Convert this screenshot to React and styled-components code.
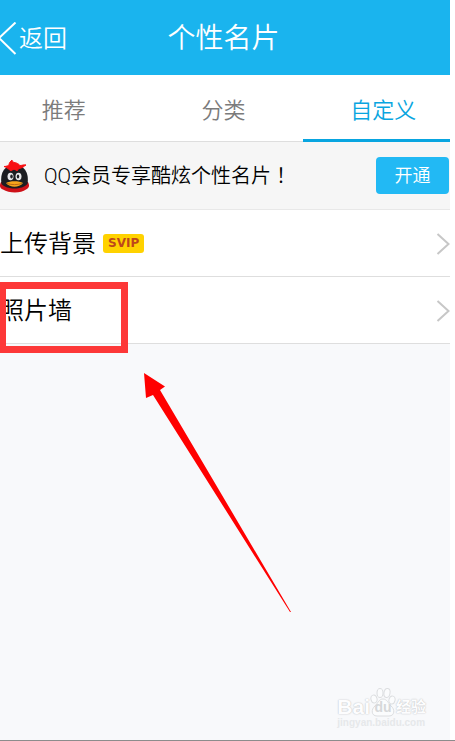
import { useState } from 'react';
import styled, { createGlobalStyle } from 'styled-components';

const GlobalStyle = createGlobalStyle`
  * {
    box-sizing: border-box;
  }

  body {
    margin: 0;
    background: #fff;
    font-family: Roboto, 'Noto Sans CJK SC', sans-serif;
    font-weight: 350;
  }

  button {
    font: inherit;
    border: none;
    padding: 0;
    background: none;
    cursor: pointer;
  }
`;

const Screen = styled.div`
  position: relative;
  display: flex;
  flex-direction: column;
  min-height: 100vh;
  border-bottom: 1px solid #8c8c8c;
`;

const Page = styled.div`
  position: relative;
  flex: 1;
  margin-right: 5px;
  overflow: hidden;
  background: #f8f9fb;
`;

const Header = styled.header`
  display: grid;
  grid-template-columns: 1fr auto 1fr;
  align-items: center;
  height: 75px;
  padding: 3px 3px 0 0;
  background: #1ab4ee;
  color: #fff;
`;

const BackLink = styled.a`
  display: flex;
  align-items: center;
  gap: 2px;
  color: inherit;
  font-size: 24px;
  line-height: 32px;
  text-decoration: none;
`;

const Title = styled.h1`
  margin: 0;
  font-size: 28px;
  font-weight: 350;
  line-height: 40px;
`;

// the strip is wider than the page and runs off both edges
const Tabs = styled.nav`
  display: grid;
  grid-template-columns: repeat(3, 1fr);
  height: 67px;
  margin: 0 -13px 0 -16px;
  background: #fff;
`;

const Tab = styled.button`
  padding-top: ${({ $active }) => ($active ? '8px' : '6px')};
  border-bottom: ${({ $active }) => ($active ? '3px solid #08a5e0' : '1px solid #dedede')};
  color: ${({ $active }) => ($active ? '#08a5e0' : '#7b7b7b')};
  font-size: 22px;
  line-height: 32px;
`;

const Promo = styled.section`
  display: flex;
  align-items: center;
  height: 68px;
  padding-right: 1px;
  border-bottom: 1px solid #e8e8e8;
  background: #f6f6f6;
`;

const PromoText = styled.p`
  flex: 1;
  margin: 0 0 0 14px;
  color: #000;
  font-size: 20px;
  line-height: 28px;
`;

// the TC face centres the full-width mark in its cell
const Mark = styled.span`
  font-family: 'Noto Sans CJK TC', sans-serif;
`;

const OpenButton = styled.button`
  width: 73px;
  height: 37px;
  padding-bottom: 3px;
  border-radius: 4px;
  background: #22b9f4;
  color: #fff;
  font-size: 18px;
`;

const Row = styled.a`
  position: relative;
  display: flex;
  align-items: center;
  height: 67px;
  padding-top: 1px;
  border-bottom: 1px solid #dedede;
  background: #fff;
  color: #000;
  text-decoration: none;
`;

const RowLabel = styled.span`
  font-size: 24px;
  line-height: 32px;
`;

const Badge = styled.span`
  margin-left: 7px;
  padding: 0 5px;
  border-radius: 3px;
  background: #ffd200;
  color: #bd471b;
  font-family: 'DejaVu Sans', sans-serif;
  font-size: 12px;
  font-weight: 700;
  line-height: 19px;
`;

const RowArrow = styled.svg`
  margin-left: auto;
`;

const Highlight = styled.div`
  position: absolute;
  z-index: 1;
  top: 5px;
  left: 0;
  width: 128px;
  height: 71px;
  border: 7px solid #fd3838;
  border-left-width: 6px;
`;

const Pointer = styled.svg`
  position: absolute;
  top: 373px;
  left: 144px;
`;

const Watermark = styled.div`
  position: absolute;
  right: 24px;
  bottom: 11px;
  color: #fdfdfe;
  font-family: 'Liberation Sans', 'Noto Sans CJK SC', sans-serif;
  font-weight: 700;
`;

const WatermarkLogo = styled.div`
  display: flex;
  align-items: flex-end;
  line-height: 20px;
  text-shadow: 0 0 1px #bfc1c4, 0 0 2px #d4d6d8;
`;

const WatermarkWord = styled.span`
  font-size: ${({ $small }) => ($small ? '15px' : '21px')};
`;

const Paw = styled.span`
  position: relative;
  display: flex;
  width: 26px;
  height: 30px;
`;

const PawText = styled.span`
  position: absolute;
  right: 0;
  bottom: 0;
  left: 0;
  color: #d6d8da;
  font-size: 14px;
  text-align: center;
  text-shadow: none;
`;

const WatermarkSite = styled.div`
  color: #e6e8ea;
  font-size: 10px;
  line-height: 12px;
`;

const BackIcon = () => (
  <svg width="17" height="34" viewBox="0 0 17 34" fill="none" stroke="#fff" strokeWidth="2" aria-hidden="true">
    <path d="M15.500 0.500 -1 16 15.500 32" />
  </svg>
);

const ArrowIcon = () => (
  <RowArrow width="14" height="22" viewBox="0 0 14 22" fill="none" stroke="#c7c7c7" strokeWidth="2" aria-hidden="true">
    <path d="M1.500 1 12.500 11 1.500 21" />
  </RowArrow>
);

const PenguinIcon = () => (
  <svg width="30" height="34" viewBox="0 0 30 34" aria-hidden="true">
    <path d="M1 23C-1 27 0 29 3 30.500C9 34.500 21 34.500 26 30.500C29 29 30 27 28 23Z" fill="#ce1118" />
    <path d="M1.500 25C0 16 3 6 14.500 6S29 16 27.500 25C22 31 7 31 1.500 25Z" fill="#1c1d21" />
    <path d="M11 12C8 9.500 6 8 4 7.500C7 7.500 8 6.500 9 6C9 3.500 11 2 12 1C12 2 13 3 14 3.500C16 3.500 19 5 20 6.500C22 6.500 24 5.500 26 6C24 7 24 8 21 9C19 9.500 18 10 17 12C15 10 13 10 11 12Z" fill="#f80f12" stroke="#f80f12" />
    <ellipse cx="10.500" cy="17.500" rx="3" ry="3.800" fill="#e8e8ea" />
    <ellipse cx="18.500" cy="17.500" rx="3" ry="3.800" fill="#e8e8ea" />
    <ellipse cx="11.500" cy="17.500" rx="1.300" ry="1.900" fill="#202126" />
    <ellipse cx="18" cy="17.500" rx="1.200" ry="1.900" fill="#202126" />
    <path d="M6 24C10 21.500 19 21.500 23 24C19 29 10 29 6 24Z" fill="#f7a51c" />
    <path d="M7 24.500C12 26 17 26 22 24.500" fill="none" stroke="#bd6913" />
  </svg>
);

const PawIcon = () => (
  <svg width="26" height="30" viewBox="0 0 26 30" fill="#fbfcfd" stroke="#dcdee0" aria-hidden="true">
    <ellipse cx="4" cy="12" rx="3" ry="4" transform="rotate(-15 4 12)" />
    <ellipse cx="10" cy="6" rx="3" ry="4.500" />
    <ellipse cx="17" cy="6" rx="3" ry="4.500" transform="rotate(10 17 6)" />
    <ellipse cx="22" cy="13" rx="3" ry="4" transform="rotate(15 22 13)" />
    <path d="M13 12C9 12 8 16 5 19C1 22 1 29 7 29H19C25 29 25 22 21 19C18 16 17 12 13 12Z" />
  </svg>
);

const tabs = ['推荐', '分类', '自定义'];

const App = () => {
  const [activeTab, setActiveTab] = useState('自定义');

  return (
    <Screen>
      <GlobalStyle />
      <Page>
        <Header>
          <BackLink href="#back">
            <BackIcon />
            返回
          </BackLink>
          <Title>个性名片</Title>
        </Header>

        <Tabs>
          {tabs.map((tab) => (
            <Tab key={tab} $active={tab === activeTab} onClick={() => setActiveTab(tab)}>
              {tab}
            </Tab>
          ))}
        </Tabs>

        <Promo>
          <PenguinIcon />
          <PromoText>
            QQ会员专享酷炫个性名片<Mark lang="zh-TW">！</Mark>
          </PromoText>
          <OpenButton>开通</OpenButton>
        </Promo>

        <Row href="#background">
          <RowLabel>上传背景</RowLabel>
          <Badge>SVIP</Badge>
          <ArrowIcon />
        </Row>
        <Row href="#photos">
          <RowLabel>照片墙</RowLabel>
          <ArrowIcon />
          <Highlight />
        </Row>

        <Pointer width="148" height="240" viewBox="0 0 148 240" fill="#f00" aria-hidden="true">
          <path d="M0 0 21 13.500 16 17 147 239 146 239 9 22 2 25Z" />
        </Pointer>

        <Watermark>
          <WatermarkLogo>
            <WatermarkWord>Bai</WatermarkWord>
            <Paw>
              <PawIcon />
              <PawText>du</PawText>
            </Paw>
            <WatermarkWord $small>经验</WatermarkWord>
          </WatermarkLogo>
          <WatermarkSite>jingyan.baidu.com</WatermarkSite>
        </Watermark>
      </Page>
    </Screen>
  );
};

export default App;
